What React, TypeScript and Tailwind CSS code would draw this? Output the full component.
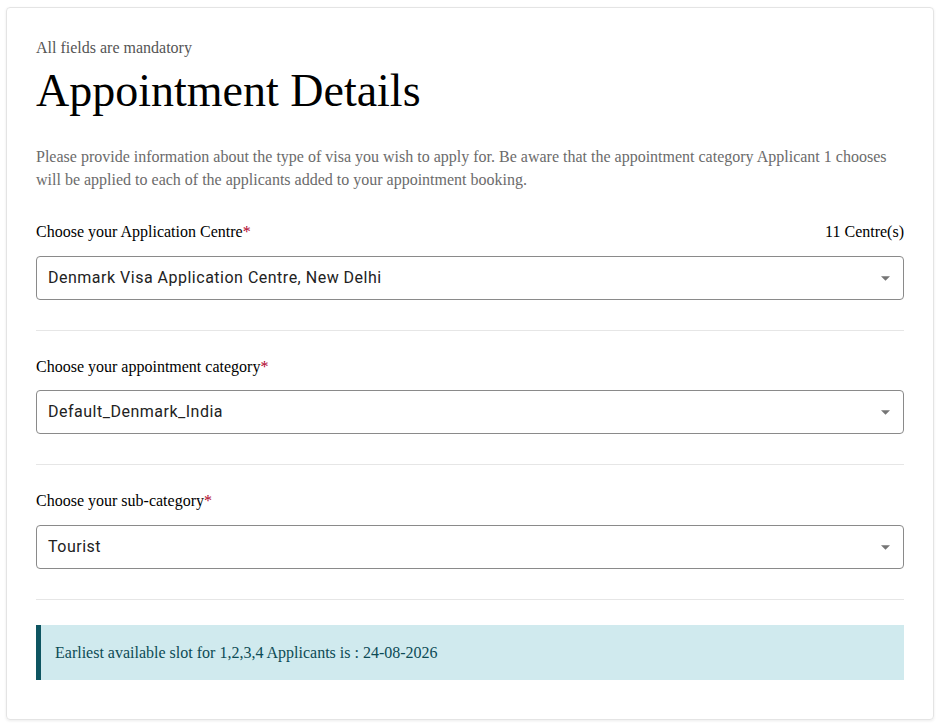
import React from 'react';

const serif = { fontFamily: '"Liberation Serif", "Times New Roman", serif' };

const Select: React.FC<{ value: string }> = ({ value }) => (
  <div
    className="h-[44px] border border-[#8a8a8a] rounded-[4px] flex items-center justify-between pl-[11px] pr-[13px] bg-white"
    style={{ fontFamily: 'Roboto, "Liberation Sans", sans-serif' }}
  >
    <span className="text-[16px] text-[#222] tracking-[0.5px]">{value}</span>
    <svg width="9" height="5" viewBox="0 0 10 5" className="mt-[1px]">
      <path d="M0 0 L10 0 L5 5 Z" fill="#757575" />
    </svg>
  </div>
);

const Field: React.FC<{ label: string; value: string; right?: string; gap?: string }> = ({ label, value, right, gap = 'mb-[14px]' }) => (
  <div>
    <div className={`flex items-center justify-between text-[16px] text-black leading-[18px] ${gap}`}>
      <span>
        {label}
        <span className="text-[#b0002a]">*</span>
      </span>
      {right && <span>{right}</span>}
    </div>
    <Select value={value} />
  </div>
);

export default function App() {
  return (
    <div className="min-h-screen bg-white pt-[7px] pl-[6px] pr-[3px]" style={serif}>
      <div className="border border-[#e4e4e4] rounded-[4px] shadow-[0_1px_3px_rgba(0,0,0,0.08)] px-[29px] pt-[31px] pb-[39px]">
        <p className="text-[16px] text-[#555] leading-[18px]">All fields are mandatory</p>
        <h1 className="text-[46px] text-black leading-[52px] mt-[8px]">Appointment Details</h1>
        <p className="text-[16px] text-[#6b6b6b] leading-[23px] mt-[28px]">
          Please provide information about the type of visa you wish to apply for. Be aware that the appointment category Applicant 1 chooses will be applied to each of the applicants added to your appointment booking.
        </p>
        <div className="mt-[32px]">
          <Field label="Choose your Application Centre" value="Denmark Visa Application Centre, New Delhi" right="11 Centre(s)" gap="mb-[15px]" />
        </div>
        <div className="h-px bg-[#e6e6e6] mt-[30px] mb-[27px]" />
        <Field label="Choose your appointment category" value="Default_Denmark_India" />
        <div className="h-px bg-[#e6e6e6] mt-[30px] mb-[27px]" />
        <Field label="Choose your sub-category" value="Tourist" gap="mb-[15px]" />
        <div className="h-px bg-[#e6e6e6] mt-[30px] mb-[25px]" />
        <div className="h-[55px] bg-[#d0eaee] border-l-[5px] border-[#0e5561] flex items-center pl-[14px]">
          <span className="text-[16px] text-[#0c4a55]">Earliest available slot for 1,2,3,4 Applicants is : 24-08-2026</span>
        </div>
      </div>
    </div>
  );
}
